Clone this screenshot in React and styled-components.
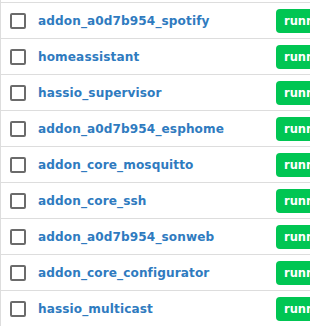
import React from "react";
import styled, { createGlobalStyle } from "styled-components";

const Global = createGlobalStyle`
  html, body { margin: 0; padding: 0; background: #fff; }
  body { overflow: hidden; }
`;

const Table = styled.div`
  width: 310px;
  height: 326px;
  overflow: hidden;
  border-left: 1px solid #dddddd;
  padding-top: 2px;
  box-sizing: border-box;
  font-family: "DejaVu Sans", "Open Sans", sans-serif;
`;

const Row = styled.div`
  display: flex;
  align-items: center;
  height: 36px;
  box-sizing: border-box;
  border-top: 1px solid #dddddd;
  white-space: nowrap;
`;

const Check = styled.span`
  flex: none;
  width: 16px;
  height: 16px;
  box-sizing: border-box;
  border: 2px solid #6b6b6b;
  border-radius: 2px;
  margin-left: 9px;
  margin-top: 1px;
`;

const Name = styled.a`
  flex: none;
  width: 238px;
  margin-left: 12px;
  color: #2f7bbf;
  font-size: 12.1px;
  font-weight: 600;
  text-decoration: none;
  letter-spacing: 0.1px;
`;

const Badge = styled.span`
  flex: none;
  display: inline-flex;
  align-items: center;
  height: 24px;
  padding: 0 8px;
  margin-top: 1px;
  background: #00c653;
  color: #fff;
  border-radius: 4px;
  font-size: 11.5px;
  font-weight: 700;
`;

const names = [
  "addon_a0d7b954_spotify",
  "homeassistant",
  "hassio_supervisor",
  "addon_a0d7b954_esphome",
  "addon_core_mosquitto",
  "addon_core_ssh",
  "addon_a0d7b954_sonweb",
  "addon_core_configurator",
  "hassio_multicast",
];

export default function App() {
  return (
    <>
      <Global />
      <Table>
        {names.map((n) => (
          <Row key={n}>
            <Check />
            <Name>{n}</Name>
            <Badge>running</Badge>
          </Row>
        ))}
      </Table>
    </>
  );
}
